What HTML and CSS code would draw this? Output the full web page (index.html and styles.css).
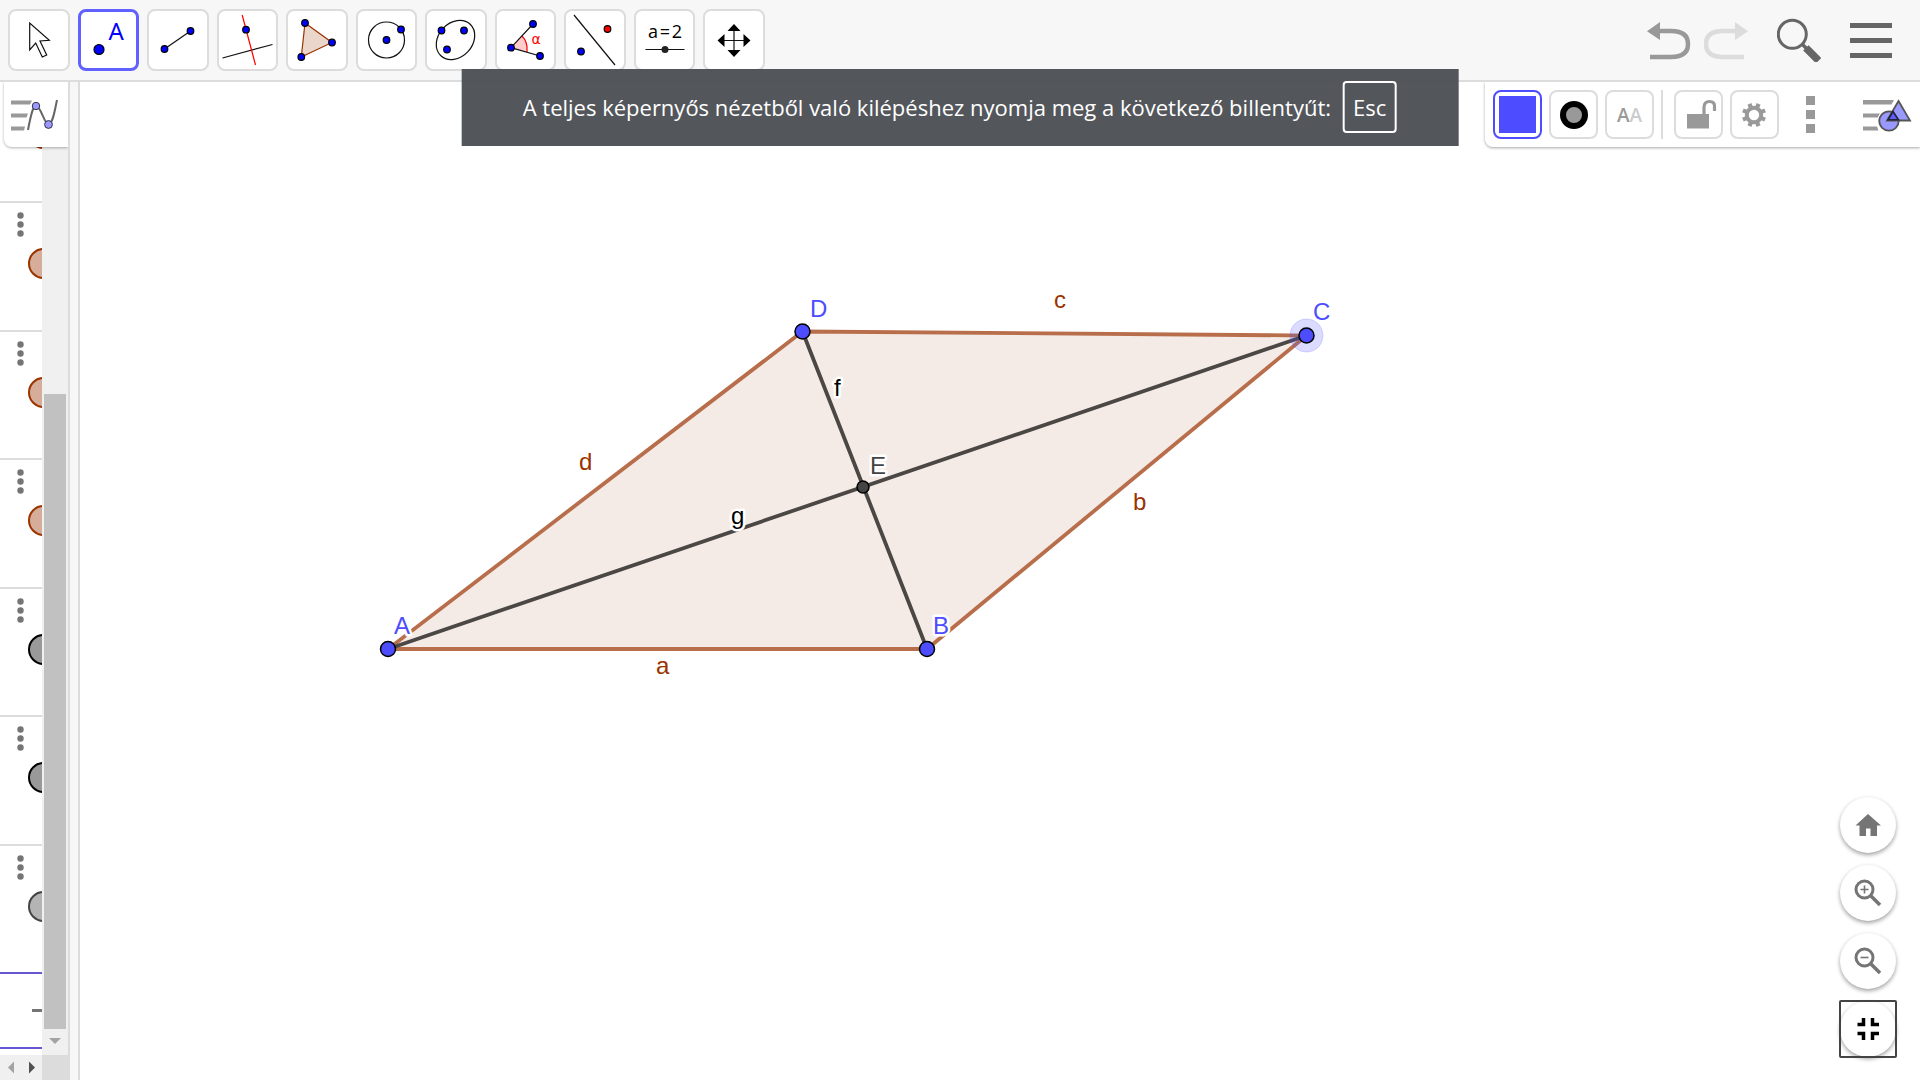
FILE: index.html
```html
<!DOCTYPE html>
<html lang="hu">
<head>
<meta charset="utf-8">
<title>GeoGebra</title>
<link rel="stylesheet" href="styles.css">
</head>
<body>
<header class="toolbar">
  <div class="tools">
    <button class="tool" aria-label="Mozgatás"><svg class="tool-icon" viewBox="10 11 58 58"><path d="M29.7 23V50l6-7 6.600 14 4.400-2-6.700-14 9.300-.7z" fill="#fff" stroke="#111" stroke-width="1.200"/></svg></button>
    <button class="tool tool-active" aria-label="Pont"><svg class="tool-icon" viewBox="79.500 11 58 58"><circle cx="99.500" cy="49.500" r="5" class="pt"/><text x="109" y="40" class="t-point">A</text></svg></button>
    <button class="tool" aria-label="Szakasz"><svg class="tool-icon" viewBox="149 11 58 58"><path d="M164.500 49 190.500 31" class="ln"/><circle cx="164.500" cy="49" r="3.300" class="pt"/><circle cx="190.500" cy="31" r="3.300" class="pt"/></svg></button>
    <button class="tool" aria-label="Merőleges"><svg class="tool-icon" viewBox="218.500 11 58 58"><path d="M222 58 272 44.500" class="ln"/><path d="M241.700 15 255 65" class="ln red"/><circle cx="245.500" cy="29.700" r="3.300" class="pt"/></svg></button>
    <button class="tool" aria-label="Sokszög"><svg class="tool-icon" viewBox="288 11 58 58"><path d="M305 23 332 42.500 301.300 57z" fill="#ebd6cc" stroke="#993300" stroke-width="1.200"/><circle cx="305" cy="23" r="3.300" class="pt"/><circle cx="332" cy="42.500" r="3.300" class="pt"/><circle cx="301.300" cy="57" r="3.300" class="pt"/></svg></button>
    <button class="tool" aria-label="Kör"><svg class="tool-icon" viewBox="357.500 11 58 58"><circle cx="386" cy="40" r="18" class="ln"/><circle cx="386" cy="40" r="3.300" class="pt"/><circle cx="400.500" cy="29.500" r="3.300" class="pt"/></svg></button>
    <button class="tool" aria-label="Ellipszis"><svg class="tool-icon" viewBox="427 11 58 58"><ellipse cx="455.500" cy="40" rx="21.500" ry="17" transform="rotate(-47 455.500 40)" class="ln"/><circle cx="441.500" cy="30.500" r="3.300" class="pt"/><circle cx="464" cy="30.500" r="3.300" class="pt"/><circle cx="447" cy="49.500" r="3.300" class="pt"/></svg></button>
    <button class="tool" aria-label="Szög"><svg class="tool-icon" viewBox="496.500 11 58 58"><path d="M510.500 47.700 521.500 36Q527 43 526.500 52z" fill="#fcc"/><path d="M521.500 36Q527.500 42 526.500 52" class="ln red"/><path d="M532.500 24 510.500 47.700 539.500 56" class="ln"/><circle cx="510.500" cy="47.700" r="3.300" class="pt"/><circle cx="532.500" cy="24" r="3.300" class="pt"/><circle cx="539.500" cy="56" r="3.300" class="pt"/><text x="531" y="44" class="t-alpha">α</text></svg></button>
    <button class="tool" aria-label="Tükrözés"><svg class="tool-icon" viewBox="566 11 58 58"><path d="M574 15 615 65" class="ln"/><circle cx="581" cy="51.500" r="3.300" class="pt"/><circle cx="607.500" cy="29" r="3.300" class="pt pt-red"/></svg></button>
    <button class="tool" aria-label="Csúszka"><svg class="tool-icon" viewBox="635.500 11 58 58"><text x="664.500" y="38" class="t-slider">a&#8202;=&#8202;2</text><path d="M645 49.500H684" class="ln"/><circle cx="664.500" cy="49.500" r="3.500" fill="#222"/></svg></button>
    <button class="tool" aria-label="Rajzlap mozgatása"><svg class="tool-icon" viewBox="705 11 58 58"><path d="M720 40.500H748M734 27V54" class="ln"/><path d="M734 24l6.500 7h-13zM734 57l6.500-7h-13zM717.500 40.500l7-6.500v13zM750.500 40.500l-7-6.500v13z"/></svg></button>
  </div>
  <div class="actions">
    <button class="action" aria-label="Visszavonás"><svg width="44" height="44" viewBox="1647 19 44 44"><path d="M1659 32H1671Q1688 32 1688 45T1671 58H1650" fill="none" stroke="#999" stroke-width="4.500"/><path d="M1647 32.300 1660 23V41z" fill="#999"/></svg></button>
    <button class="action" aria-label="Mégis" disabled><svg width="44" height="44" viewBox="1704 19 44 44"><path d="M1736 32H1723Q1706 32 1706 45T1723 58H1744" fill="none" stroke="#dcdcdc" stroke-width="4.500"/><path d="M1748 32.300 1735 23V41z" fill="#dcdcdc"/></svg></button>
    <button class="action action-search" aria-label="Keresés"><svg width="44" height="44" viewBox="1777 19 44 44"><circle cx="1792.300" cy="35.300" r="14" fill="none" stroke="#666" stroke-width="3"/><path d="M1802 45 1809 52" stroke="#666" stroke-width="3.500"/><path d="M1808.500 51.500 1816 59" stroke="#666" stroke-width="7.500" stroke-linecap="square"/></svg></button>
    <button class="action" aria-label="Menü"><svg width="44" height="44" viewBox="1849 18 44 44"><path d="M1850 25.500H1892M1850 40.500H1892M1850 55.500H1892" stroke="#666" stroke-width="5"/></svg></button>
  </div>
</header>

<main class="workspace">
  <aside class="algebra">
    <div class="list-wrap">
      <div class="list">
        <div class="row row-first"><svg class="row-art brown" viewBox="0 0 42 128"><circle cx="43.500" cy="60.500" r="14.500"/></svg></div>
        <div class="rows">
          <div class="row"><svg class="row-art brown" viewBox="0 0 42 128"><g class="dots"><circle cx="20.500" cy="12.500" r="3.200"/><circle cx="20.500" cy="21.500" r="3.200"/><circle cx="20.500" cy="30.500" r="3.200"/></g><circle cx="43.500" cy="60.500" r="14.500"/></svg></div>
          <div class="row"><svg class="row-art brown" viewBox="0 0 42 128"><g class="dots"><circle cx="20.500" cy="12.500" r="3.200"/><circle cx="20.500" cy="21.500" r="3.200"/><circle cx="20.500" cy="30.500" r="3.200"/></g><circle cx="43.500" cy="60.500" r="14.500"/></svg></div>
          <div class="row"><svg class="row-art brown" viewBox="0 0 42 128"><g class="dots"><circle cx="20.500" cy="12.500" r="3.200"/><circle cx="20.500" cy="21.500" r="3.200"/><circle cx="20.500" cy="30.500" r="3.200"/></g><circle cx="43.500" cy="60.500" r="14.500"/></svg></div>
          <div class="row"><svg class="row-art black" viewBox="0 0 42 128"><g class="dots"><circle cx="20.500" cy="12.500" r="3.200"/><circle cx="20.500" cy="21.500" r="3.200"/><circle cx="20.500" cy="30.500" r="3.200"/></g><circle cx="43.500" cy="60.500" r="14.500"/></svg></div>
          <div class="row"><svg class="row-art black" viewBox="0 0 42 128"><g class="dots"><circle cx="20.500" cy="12.500" r="3.200"/><circle cx="20.500" cy="21.500" r="3.200"/><circle cx="20.500" cy="30.500" r="3.200"/></g><circle cx="43.500" cy="60.500" r="14.500"/></svg></div>
          <div class="row row-last"><svg class="row-art gray" viewBox="0 0 42 128"><g class="dots"><circle cx="20.500" cy="12.500" r="3.200"/><circle cx="20.500" cy="21.500" r="3.200"/><circle cx="20.500" cy="30.500" r="3.200"/></g><circle cx="43.500" cy="60.500" r="14.500"/></svg></div>
        </div>
        <div class="input-row"><span class="dash"></span></div>
      </div>
      <div class="vscroll"><div class="thumb"></div><svg width="22" height="26" viewBox="0 0 22 26"><path d="M5 9H17L11 15z" fill="#a3a3a3"/></svg></div>
    </div>
    <div class="hscroll"><svg width="42" height="25" viewBox="0 0 42 25"><path d="M14 6.500V18.500L8 12.500z" fill="#a3a3a3"/><path d="M29 6.500V18.500L35 12.500z" fill="#505050"/></svg></div>
    <button class="view-toggle" aria-label="Algebra ablak"><svg width="50" height="36" viewBox="10 96 50 36"><path d="M11 99.500h21l-2 4H11zM11 112.500h17l-1.500 4H11zM11 125.500h14l-1 4H11z" fill="#999"/><path d="M28 129C31 113 33 105 36 105C41 105 44 123 48.500 123C53 123 55 108 57 99" fill="none" stroke="#666" stroke-width="2"/><circle cx="36" cy="105" r="3.700" fill="#99f" stroke="#334" stroke-width="1"/><circle cx="48.500" cy="123.500" r="3.900" fill="#99f" stroke="#334" stroke-width="1"/></svg></button>
  </aside>
  <div class="splitter"></div>
  <section class="canvas">
    <svg class="drawing" viewBox="80 82 1840 998" preserveAspectRatio="xMinYMin meet">
      <path d="M388 649H927L1306.500 335.500 802.500 331.500z" fill="#f4ebe6"/>
      <path d="M388 649H927L1306.500 335.500 802.500 331.500z" fill="none" stroke="#b86e4b" stroke-width="3.800"/>
      <path d="M802.500 331.500 927 649M388 649 1306.500 335.500" stroke="#4b4745" stroke-width="3.800"/>
      <circle cx="1306.500" cy="335.500" r="16.500" fill="#4d4dff" fill-opacity=".2" stroke="#4d4dff" stroke-opacity=".2"/>
      <g class="label label-blue"><text x="394" y="634">A</text><text x="933" y="634">B</text><text x="1313" y="320">C</text><text x="810" y="317">D</text></g>
      <g class="label label-brown"><text x="656" y="674">a</text><text x="1133" y="510">b</text><text x="1054" y="308">c</text><text x="579" y="470">d</text></g>
      <g class="label"><text x="870" y="474" class="label-gray">E</text><text x="834" y="396">f</text><text x="731" y="524">g</text></g>
      <g fill="#4d4dff" stroke="#000" stroke-width="1.500"><circle cx="388" cy="649" r="7.500"/><circle cx="927" cy="649" r="7.500"/><circle cx="1306.500" cy="335.500" r="7.500"/><circle cx="802.500" cy="331.500" r="7.500"/><circle cx="863" cy="487" r="6" fill="#444"/></g>
    </svg>
  </section>

  <div class="stylebar">
    <button class="style-btn style-active" aria-label="Szín"><span class="swatch"></span></button>
    <button class="style-btn" aria-label="Pontstílus"><span class="ring"></span></button>
    <button class="style-btn" aria-label="Felirat"><span class="aa">A<span class="aa-light">A</span></span></button>
    <span class="sep"></span>
    <button class="style-btn" aria-label="Rögzítés"><svg width="45" height="45" viewBox="1676 92 45 45"><path d="M1687 114h22v14.500h-22z" fill="#999"/><path d="M1704 115V107.500Q1704 101.500 1709.500 101.500T1714.500 107V111" fill="none" stroke="#999" stroke-width="3.200"/></svg></button>
    <button class="style-btn" aria-label="Beállítások"><svg width="45" height="45" viewBox="-22 -23 45 45"><path d="M-4.600-11.100 4.600 11.100M4.600-11.100-4.600 11.100M-11.100-4.600 11.100 4.600M-11.100 4.600 11.100-4.600" stroke="#999" stroke-width="4.200"/><circle r="7.200" fill="#fff" stroke="#999" stroke-width="4"/></svg></button>
    <button class="more" aria-label="Továbbiak"><svg width="9" height="37" viewBox="0 0 9 37"><path d="M0 0h9v9H0zM0 14h9v9H0zM0 28h9v9H0z" fill="#999"/></svg></button>
    <button class="graphics" aria-label="Rajzlap"><svg width="50" height="36" viewBox="1862 96 50 36"><path d="M1863 99h31l-2.500 4.500H1863zM1863 112.500h17l-2 4H1863zM1863 125.500h14l1.500 4H1863z" fill="#999"/><circle cx="1889" cy="120" r="11.500" fill="#fff"/><circle cx="1889" cy="120" r="9.700" fill="#99f" stroke="#555" stroke-width="1.800"/><path d="M1898.500 100 1910 119.500H1887z" fill="#99f" stroke="#555" stroke-width="1.800"/><path d="M1893 110.500 1898.500 118.800H1888z" fill="#5c5cff" stroke="#223" stroke-width="1.600"/></svg></button>
  </div>

  <div class="zoom-panel">
    <button class="round" aria-label="Alapnézet"><svg width="30" height="30" viewBox="0 0 30 30"><path d="M15 4 2.500 15.500H6.500V26H13V18.500H17.500V26H24V15.500H28z" fill="#757575"/></svg></button>
    <button class="round" aria-label="Nagyítás"><svg width="30" height="30" viewBox="0 0 30 30"><circle cx="11.500" cy="11.500" r="8.500" fill="none" stroke="#757575" stroke-width="3"/><path d="M18 18 27 27" stroke="#757575" stroke-width="3.500"/><path d="M7.500 11.500h8M11.500 7.500v8" stroke="#757575" stroke-width="1.600"/></svg></button>
    <button class="round" aria-label="Kicsinyítés"><svg width="30" height="30" viewBox="0 0 30 30"><circle cx="11.500" cy="11.500" r="8.500" fill="none" stroke="#757575" stroke-width="3"/><path d="M18 18 27 27" stroke="#757575" stroke-width="3.500"/><path d="M7.500 11.500h8" stroke="#757575" stroke-width="1.600"/></svg></button>
    <button class="round round-focus" aria-label="Kilépés a teljes képernyőből"><svg width="30" height="30" viewBox="0 0 30 30"><path d="M4.500 10.500H10.500V4M26 10.500H19.500V4M4.500 19.500H10.500V26M26 19.500H19.500V26" fill="none" stroke="#000" stroke-width="3.500"/></svg></button>
  </div>
</main>

<div class="toast" role="status"><span>A teljes képernyős nézetből való kilépéshez nyomja meg a következő billentyűt:</span><kbd class="key">Esc</kbd></div>
</body>
</html>
```
FILE: styles.css
```css
* { box-sizing: border-box; }
body {
  margin: 0;
  height: 100vh;
  display: flex;
  flex-direction: column;
  overflow: hidden;
  background: #fff;
  font-family: "Open Sans", "Noto Sans", sans-serif;
}
button {
  padding: 0;
  border: 0;
  background: none;
  font: inherit;
}
svg { display: block; flex: none; }

.toolbar {
  flex: none;
  display: flex;
  justify-content: space-between;
  align-items: center;
  height: 82px;
  padding: 0 27px 0 8px;
  background: #f7f7f7;
  border-bottom: 2px solid #dcdcdc;
}
.tools {
  display: grid;
  grid-template-columns: repeat(11, 1fr);
  gap: 8px;
  width: 757px;
}
.tool {
  height: 62px;
  overflow: hidden;
  background: #fff;
  border: 2px solid #dcdcdc;
  border-radius: 8px;
}
.tool-active { border: 3px solid #6161ff; }
.tool-active .tool-icon { margin: -1px -2px; }
.tool-icon { width: 58px; height: 58px; }
.ln { fill: none; stroke: #111; stroke-width: 1.2px; }
.red { stroke: #f00; }
.pt { fill: #00f; stroke: #000; stroke-width: 1.2px; }
.pt-red { fill: #f00; }
.t-point { font: 24px "Noto Sans", sans-serif; fill: #00f; }
.t-alpha { font: 14px "DejaVu Sans", sans-serif; fill: #f00; }
.t-slider { font: 18px "Open Sans", sans-serif; text-anchor: middle; }

.actions { display: flex; align-items: center; gap: 13px; }
.action-search { margin: 0 15px 0 16px; }

.workspace {
  position: relative;
  flex: 1;
  min-height: 0;
  display: flex;
}
.algebra {
  position: relative;
  flex: none;
  width: 70px;
  display: flex;
  flex-direction: column;
  border-right: 2px solid #dcdcdc;
}
.list-wrap { flex: 1; min-height: 0; display: flex; }
.list {
  width: 42px;
  display: flex;
  flex-direction: column;
  overflow: hidden;
}
.row { overflow: hidden; border-bottom: 2px solid #dcdcdc; }
.row-first {
  flex: 1;
  min-height: 0;
  display: flex;
  align-items: flex-end;
}
.rows {
  flex: none;
  display: grid;
  grid-template-rows: repeat(6, 1fr);
  height: 771px;
}
.row-last { border-color: #6557d2; }
.row-art { width: 42px; height: 128px; stroke-width: 2px; }
.brown { fill: #d6ad99; stroke: #993300; }
.black { fill: #999; stroke: #000; }
.gray { fill: #b4b4b4; stroke: #444; }
.dots { fill: #757575; stroke: none; }
.input-row {
  flex: none;
  display: flex;
  align-items: center;
  justify-content: flex-end;
  height: 75px;
  margin-bottom: 6px;
  border-bottom: 2px solid #6557d2;
}
.dash { width: 10px; height: 3px; background: #757575; }
.vscroll {
  width: 26px;
  padding: 0 2px;
  display: flex;
  flex-direction: column;
  justify-content: flex-end;
  background: #f0f0f0;
}
.thumb { height: 635px; background: #c1c1c1; }
.hscroll { flex: none; margin-right: -2px; background: #dcdcdc; }
.hscroll svg { background: #f0f0f0; }
.view-toggle {
  position: absolute;
  top: 0;
  right: 0;
  width: 64px;
  height: 65px;
  display: flex;
  align-items: center;
  justify-content: center;
  padding: 0 2px 0 0;
  background: #fff;
  border-radius: 0 0 0 8px;
  box-shadow: 0 1px 3px rgba(0, 0, 0, .3);
  clip-path: inset(0 0 -6px -6px);
}
.splitter {
  flex: none;
  width: 10px;
  background: #f7f7f7;
  border-right: 2px solid #dcdcdc;
}
.canvas { flex: 1; min-width: 0; }
.drawing { width: 100%; height: 100%; }
.label {
  font: 24px "Liberation Sans", Arial, sans-serif;
  paint-order: stroke;
  stroke: #fff;
  stroke-width: 5px;
  stroke-linejoin: round;
}
.label-blue { fill: #4d4dff; }
.label-brown { fill: #993300; }
.label-gray { fill: #444; }

.stylebar {
  position: absolute;
  top: 0;
  right: 0;
  height: 65px;
  display: flex;
  align-items: center;
  gap: 7px;
  padding: 0 8px;
  background: #fff;
  border-radius: 0 0 0 8px;
  box-shadow: 0 1px 3px rgba(0, 0, 0, .35);
  clip-path: inset(0 0 -6px -6px);
}
.style-btn {
  width: 49px;
  height: 49px;
  display: flex;
  align-items: center;
  justify-content: center;
  border: 2px solid #dcdcdc;
  border-radius: 8px;
}
.style-active { border-color: #4d4dff; }
.swatch { width: 37px; height: 37px; background: #4d4dff; }
.ring {
  width: 28px;
  height: 28px;
  background: #999;
  border: 6px solid #000;
  border-radius: 50%;
}
.aa { font-size: 19px; font-weight: 600; color: #999; }
.aa-light { color: #ccc; }
.sep { width: 2px; height: 49px; margin: 0 4px 0 0; background: #dcdcdc; }
.more { margin: 0 40px 0 20px; }

.zoom-panel {
  position: absolute;
  right: 24px;
  bottom: 23px;
  display: flex;
  flex-direction: column;
  gap: 12px;
}
.round {
  width: 56px;
  height: 56px;
  display: flex;
  align-items: center;
  justify-content: center;
  padding-right: 1px;
  background: #fff;
  border-radius: 50%;
  box-shadow: 0 2px 4px rgba(0, 0, 0, .38);
}
.round-focus { position: relative; outline: none; }
.round-focus::after {
  content: "";
  position: absolute;
  inset: -1px;
  border: 2px solid #444;
  border-radius: 2px;
}

.toast {
  position: absolute;
  top: 69px;
  left: 50%;
  transform: translateX(-50%);
  height: 77px;
  display: flex;
  align-items: center;
  gap: 12px;
  padding: 0 62px 2px 61px;
  white-space: nowrap;
  background: rgba(74, 77, 82, .95);
  color: #fff;
  font-size: 22px;
  line-height: 32px;
}
.key {
  font: inherit;
  padding: 8px;
  border: 2px solid #fff;
  border-radius: 4px;
}
```
